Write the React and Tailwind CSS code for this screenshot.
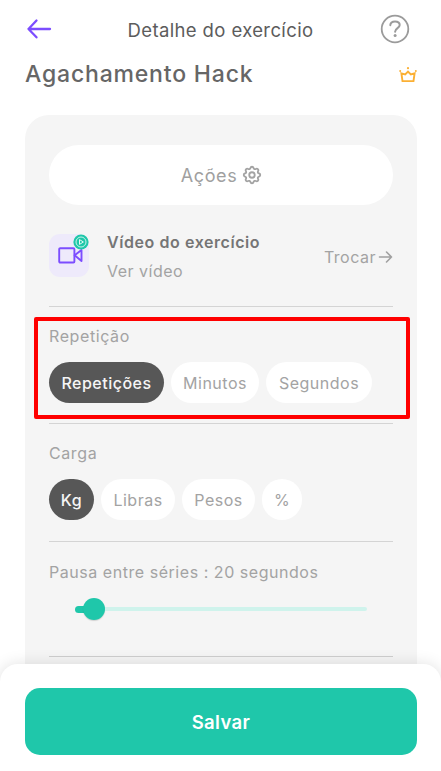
import { useState } from "react";

const REPS = [
  { label: "Repetições", width: "w-[115px]" },
  { label: "Minutos", width: "w-[88px]" },
  { label: "Segundos", width: "w-[106px]" },
];

const LOADS = [
  { label: "Kg", width: "w-[45px]" },
  { label: "Libras", width: "w-[74px]" },
  { label: "Pesos", width: "w-[73px]" },
  { label: "%", width: "w-[40px]" },
];

function BackIcon() {
  return (
    <svg width="26" height="22" viewBox="0 0 26 22" fill="none" stroke="#7c4dff" strokeWidth="2.3" strokeLinecap="round" strokeLinejoin="round">
      <path d="M24 11H2.5M10.5 2.5 2.5 11l8 8.3" />
    </svg>
  );
}

function HelpIcon() {
  return (
    <svg width="30" height="30" viewBox="0 0 30 30" fill="none" stroke="#9b9b9b" strokeWidth="1.8" strokeLinecap="round">
      <circle cx="15" cy="15" r="13.3" />
      <path d="M10.3 11.2c.2-2.3 2-3.7 4.7-3.7s4.7 1.4 4.7 3.6c0 3.1-4.6 3-4.6 6.6" strokeWidth="2" />
      <circle cx="15.1" cy="21.4" r="1.5" fill="#9b9b9b" stroke="none" />
    </svg>
  );
}

function CrownIcon() {
  return (
    <svg width="18" height="16" viewBox="0 0 18 16" fill="none">
      <path d="M2.4 6.3 6.2 7.5 9 4.7l2.8 2.8 3.8-1.2-1.1 7.8h-11z" stroke="#fbb034" strokeWidth="1.9" />
      <circle cx="9" cy="1.2" r="1.1" fill="#fbb034" />
      <circle cx="1.2" cy="4" r="1" fill="#fbb034" />
      <circle cx="16.8" cy="4" r="1" fill="#fbb034" />
    </svg>
  );
}

function GearIcon() {
  return (
    <svg width="22" height="22" viewBox="0 0 24 24" fill="none" stroke="#a3a3a3" strokeWidth="2" strokeLinecap="round" strokeLinejoin="round">
      <path d="M10.325 4.317c.426-1.756 2.924-1.756 3.35 0a1.724 1.724 0 0 0 2.573 1.066c1.543-.94 3.31.826 2.37 2.37a1.724 1.724 0 0 0 1.065 2.572c1.756.426 1.756 2.924 0 3.35a1.724 1.724 0 0 0-1.066 2.573c.94 1.543-.826 3.31-2.37 2.37a1.724 1.724 0 0 0-2.572 1.065c-.426 1.756-2.924 1.756-3.35 0a1.724 1.724 0 0 0-2.573-1.066c-1.543.94-3.31-.826-2.37-2.37a1.724 1.724 0 0 0-1.065-2.572c-1.756-.426-1.756-2.924 0-3.35a1.724 1.724 0 0 0 1.066-2.573c-.94-1.543.826-3.31 2.37-2.37 1 .608 2.296.07 2.572-1.065z" />
      <circle cx="12" cy="12" r="3" />
    </svg>
  );
}

function VideoIcon() {
  return (
    <svg width="25" height="17" viewBox="0 0 25 17" fill="none" stroke="#7c4dff" strokeWidth="1.9" strokeLinejoin="round">
      <rect x="1.2" y="1.2" width="15.2" height="14.3" rx="1" />
      <path d="M16.6 8.3 23.5 3v11z" />
    </svg>
  );
}

function PlayBadge() {
  return (
    <svg width="16" height="16" viewBox="0 0 16 16" fill="none">
      <circle cx="8" cy="8" r="7.6" fill="#1fc7aa" />
      <circle cx="8" cy="8" r="5" stroke="#c9f3ea" strokeWidth="1" />
      <path d="M6.5 5.6v4.8L10.4 8z" stroke="#e4faf5" strokeWidth="1" strokeLinejoin="round" />
    </svg>
  );
}

function Chips({ options, value, onChange }) {
  return (
    <div className="flex gap-[7px]">
      {options.map(({ label, width }) => (
        <button
          key={label}
          onClick={() => onChange(label)}
          className={`${width} h-[41px] shrink-0 rounded-full text-base tracking-[0.5px] ${
            value === label ? "bg-[#575757] font-medium text-[#f5f5f5]" : "bg-white text-[#a3a3a3]"
          }`}
        >
          {label}
        </button>
      ))}
    </div>
  );
}

export default function App() {
  const [rep, setRep] = useState("Repetições");
  const [load, setLoad] = useState("Kg");

  return (
    <div className="flex h-[771px] w-[441px] flex-col overflow-hidden bg-white font-['Inter',sans-serif]">
      <header className="flex h-[58px] shrink-0 items-center justify-between pl-[26px] pr-[31px]">
        <button aria-label="Voltar">
          <BackIcon />
        </button>
        <h1 className="pl-[9px] pt-[3px] text-[18.5px] tracking-[0.38px] text-[#5c5c5c]">Detalhe do exercício</h1>
        <button aria-label="Ajuda">
          <HelpIcon />
        </button>
      </header>

      <div className="flex h-[33px] shrink-0 items-center justify-between pl-[25px] pr-6">
        <h2 className="text-[23px] font-medium tracking-[0.82px] text-[#666666]">Agachamento Hack</h2>
        <CrownIcon />
      </div>

      <main className="ml-[25px] mr-6 mt-6 min-h-0 flex-1 rounded-t-[24px] bg-[#f5f5f5] px-6 pt-[30px]">
        <button className="flex h-[60px] w-full items-center justify-center gap-1 rounded-full bg-white pl-0.5 text-[18px] tracking-[0.6px] text-[#a0a0a0]">
          <span>Ações</span>
          <GearIcon />
        </button>

        <div className="mt-[29px] flex h-[73px] border-b border-[#d4d4d4]">
          <div className="relative flex h-[43px] w-10 items-center justify-center rounded-[11px] bg-[#eeeafb] pl-0.5">
            <VideoIcon />
            <div className="absolute right-0 top-0">
              <PlayBadge />
            </div>
          </div>
          <div className="ml-[18px] flex flex-1 flex-col">
            <span className="text-base leading-[17px] font-semibold tracking-[0.57px] text-[#757575]">Vídeo do exercício</span>
            <span className="mt-3 text-base leading-[17px] tracking-[0.5px] text-[#a3a3a3]">Ver vídeo</span>
          </div>
          <button className="flex h-[45px] items-center text-base tracking-[0.5px] text-[#a3a3a3]">
            Trocar
            <svg width="15" height="14" viewBox="0 0 15 14" fill="none" stroke="#a0a0a0" strokeWidth="1.6" strokeLinecap="round" strokeLinejoin="round" className="ml-0.5">
              <path d="M1.5 7h12M8.5 2l5 5-5 5" />
            </svg>
          </button>
        </div>

        <section className="relative h-[117px] border-b border-[#d4d4d4] pt-[17px]">
          <h3 className="mb-[14px] text-base tracking-[0.6px] text-[#a3a3a3]">Repetição</h3>
          <Chips options={REPS} value={rep} onChange={setRep} />
          <div className="pointer-events-none absolute -left-[15px] top-[10px] h-[102px] w-[376px] rounded-[2px] border-4 border-[#ff0000]" />
        </section>

        <section className="h-[118px] border-b border-[#d4d4d4] pt-[17px]">
          <h3 className="mb-[14px] text-base tracking-[0.6px] text-[#a3a3a3]">Carga</h3>
          <Chips options={LOADS} value={load} onChange={setLoad} />
        </section>

        <section className="h-[115px] border-b border-[#cfcfcf] pt-[18px]">
          <h3 className="text-base tracking-[0.54px] text-[#a3a3a3]">Pausa entre séries : 20 segundos</h3>
          <div className="ml-[26px] mr-[26px] mt-[14px] flex items-center">
            <div className="h-[7px] w-[10px] rounded-l-full bg-[#1fc7aa]" />
            <div className="-ml-[2px] size-[22px] rounded-full bg-[#1fc7aa] shadow-[0_1px_1px_rgba(0,0,0,0.15)]" />
            <div className="h-1 flex-1 rounded-r-full bg-[#cff3ec]" />
          </div>
        </section>
      </main>

      <footer className="z-10 h-[107px] shrink-0 rounded-t-[18px] bg-white pl-[25px] pr-6 pt-6 shadow-[0_0_16px_rgba(0,0,0,0.12)]">
        <button className="h-[67px] w-full rounded-[15px] bg-[#1fc7aa] pt-[3px] text-[18.5px] font-semibold tracking-[0.4px] text-white">
          Salvar
        </button>
      </footer>
    </div>
  );
}
